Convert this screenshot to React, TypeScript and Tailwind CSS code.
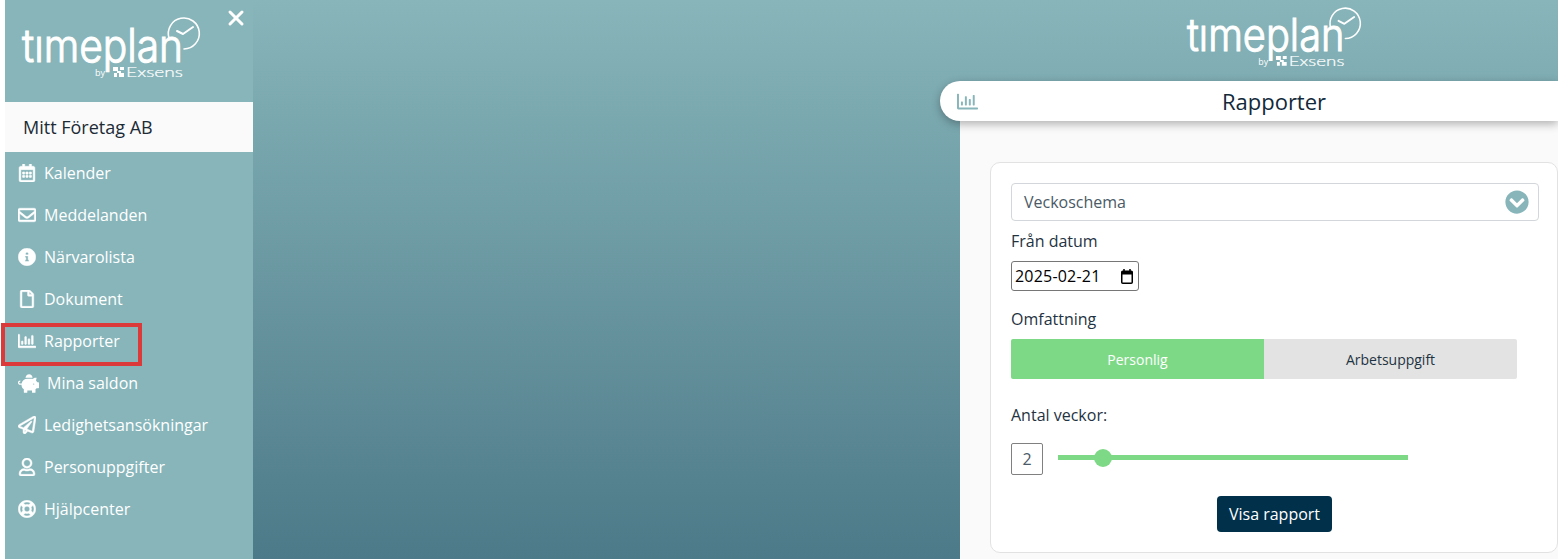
import { X } from "lucide-react";
import {
  FaChevronCircleDown,
  FaInfoCircle,
  FaPiggyBank,
  FaRegCalendarAlt,
  FaRegChartBar,
  FaRegEnvelope,
  FaRegFile,
  FaRegLifeRing,
  FaRegPaperPlane,
  FaRegUser,
} from "react-icons/fa";

const menu = [
  { label: "Kalender", icon: FaRegCalendarAlt },
  { label: "Meddelanden", icon: FaRegEnvelope },
  { label: "Närvarolista", icon: FaInfoCircle },
  { label: "Dokument", icon: FaRegFile },
  { label: "Rapporter", icon: FaRegChartBar },
  { label: "Mina saldon", icon: FaPiggyBank, wide: true },
  { label: "Ledighetsansökningar", icon: FaRegPaperPlane },
  { label: "Personuppgifter", icon: FaRegUser },
  { label: "Hjälpcenter", icon: FaRegLifeRing },
];

function Logo({ className }: { className: string }) {
  return (
    <svg viewBox="0 0 178 62" className={`overflow-visible ${className}`} fill="none">
      <text
        x="0"
        y="45"
        textLength="161"
        lengthAdjust="spacingAndGlyphs"
        fontFamily="Inter, sans-serif"
        fontWeight="300"
        fontSize="46"
        fill="#fff"
        stroke="#fff"
        strokeWidth="1.1"
      >
        tımeplan
      </text>
      <path
        d="M147 21 A15.5 15.5 0 1 1 162 32"
        stroke="#fff"
        strokeWidth="1.6"
        strokeLinecap="round"
      />
      <path
        d="M155 14 L161 17 L171 10"
        stroke="#fff"
        strokeWidth="2"
        strokeLinecap="round"
        strokeLinejoin="round"
      />
      <text x="73" y="59" fontFamily="Open Sans, sans-serif" fontSize="9" fill="#fff">
        by
      </text>
      <path
        d="M91 50h5v4h-5zM98 50h4v3h-4zM95 54h4v2h-4zM92 56h3v4h-3zM97 56h5v4h-5z"
        fill="#fff"
      />
      <text
        x="104"
        y="60"
        textLength="57"
        lengthAdjust="spacingAndGlyphs"
        fontFamily="Lato, sans-serif"
        fontWeight="300"
        fontSize="14"
        fill="#fff"
        stroke="#fff"
        strokeWidth="0.2"
      >
        Exsens
      </text>
    </svg>
  );
}

function Sidebar() {
  return (
    <aside className="relative w-[248px] shrink-0 bg-[#87b5ba] text-white">
      <button className="absolute left-[219px] top-[6px] text-white">
        <X size={24} strokeWidth={3} />
      </button>
      <div className="h-[102px] pl-[17px] pt-[17px]">
        <Logo className="w-[178px] h-[62px]" />
      </div>
      <div className="h-[50px] flex items-center bg-[#fafafa] pl-[18px] text-[18px] text-[#1c2b36]">
        Mitt Företag AB
      </div>
      <nav>
        {menu.map((item) => (
          <div key={item.label} className="h-[42px] flex items-center pl-[13px] text-[16px]">
            <span className={item.wide ? "w-[29px]" : "w-[26px]"}>
              <item.icon size={item.wide ? 21 : 18} stroke="currentColor" strokeWidth={item.wide ? 0 : 14} />
            </span>
            {item.label}
          </div>
        ))}
      </nav>
    </aside>
  );
}

function ReportForm() {
  return (
    <div className="h-[391px] rounded-[10px] border border-[#e2e2e2] bg-white pl-5 pr-[18px] pt-5 text-[#1f3342]">
      <div className="h-[38px] flex items-center justify-between rounded-[4px] border border-[#d3d6da] pl-3 pr-[9px] text-[#4a5a66]">
        <span>Veckoschema</span>
        <FaChevronCircleDown size={24} className="text-[#87b5ba]" />
      </div>
      <div className="mt-2 leading-6">Från datum</div>
      <div className="mt-2 flex h-[30px] w-[128px] items-center justify-between rounded-[3px] border border-[#767676] pl-[3px] pr-[5px] text-black">
        <span className="tracking-[0.2px]">2025-02-21</span>
        <svg viewBox="0 0 12 15" className="h-[15px] w-3" fill="none">
          <path d="M3 0v2M9 0v2" stroke="#000" strokeWidth="1.5" />
          <rect x="0.75" y="2.25" width="10.5" height="12" rx="1" stroke="#000" strokeWidth="1.5" />
          <rect x="0.75" y="2" width="10.5" height="3.5" fill="#000" />
        </svg>
      </div>
      <div className="mt-4 leading-6">Omfattning</div>
      <div className="mt-2 flex h-10 w-[506px] text-[14px]">
        <div className="w-[253px] flex items-center justify-center rounded-l-[2px] bg-[#7ed987] text-white">
          Personlig
        </div>
        <div className="w-[253px] flex items-center justify-center rounded-r-[2px] bg-[#e3e3e3]">
          Arbetsuppgift
        </div>
      </div>
      <div className="mt-6 leading-6">Antal veckor:</div>
      <div className="mt-4 flex items-center">
        <div className="h-8 w-8 flex items-center justify-center rounded-[2px] border border-[#808080] text-[#4a5a66]">
          2
        </div>
        <div className="relative mb-[3px] ml-[15px] h-[5px] w-[350px] bg-[#7ed987]">
          <div className="absolute left-[36px] top-[-6px] h-[18px] w-[18px] rounded-full bg-[#7ed987]" />
        </div>
      </div>
      <div className="mt-[21px] flex justify-center pr-[1px]">
        <button className="h-9 w-[115px] rounded-[4px] bg-[#00304a] text-[16px] text-white">
          Visa rapport
        </button>
      </div>
    </div>
  );
}

export default function App() {
  return (
    <div className="relative flex h-[559px] w-[1558px] overflow-hidden bg-white font-['Open_Sans',sans-serif] text-[16px]">
      <div className="w-[5px] shrink-0" />
      <Sidebar />
      <main className="flex flex-1 justify-end bg-gradient-to-b from-[#87b5ba] to-[#4d7a88]">
        <div className="w-[618px] flex flex-col">
          <div className="h-[81px] pl-[247px] pt-[7px]">
            <Logo className="w-[174px] h-[61px]" />
          </div>
          <header className="relative z-10 h-10 flex items-center rounded-l-full bg-white shadow-[0_3px_10px_rgba(0,0,0,0.3)]">
            <span className="w-[50px] pl-[17px] text-[#87b5ba]">
              <FaRegChartBar size={21} />
            </span>
            <h1 className="flex-1 text-center text-[22px] text-[#12293a]">Rapporter</h1>
          </header>
          <section className="ml-5 flex-1 bg-[#fafafa] pl-[30px] pt-[41px]">
            <ReportForm />
          </section>
        </div>
      </main>
      <div className="absolute left-[1px] top-[323px] h-[43px] w-[141px] border-[4px] border-[#dc3a3a]" />
    </div>
  );
}
